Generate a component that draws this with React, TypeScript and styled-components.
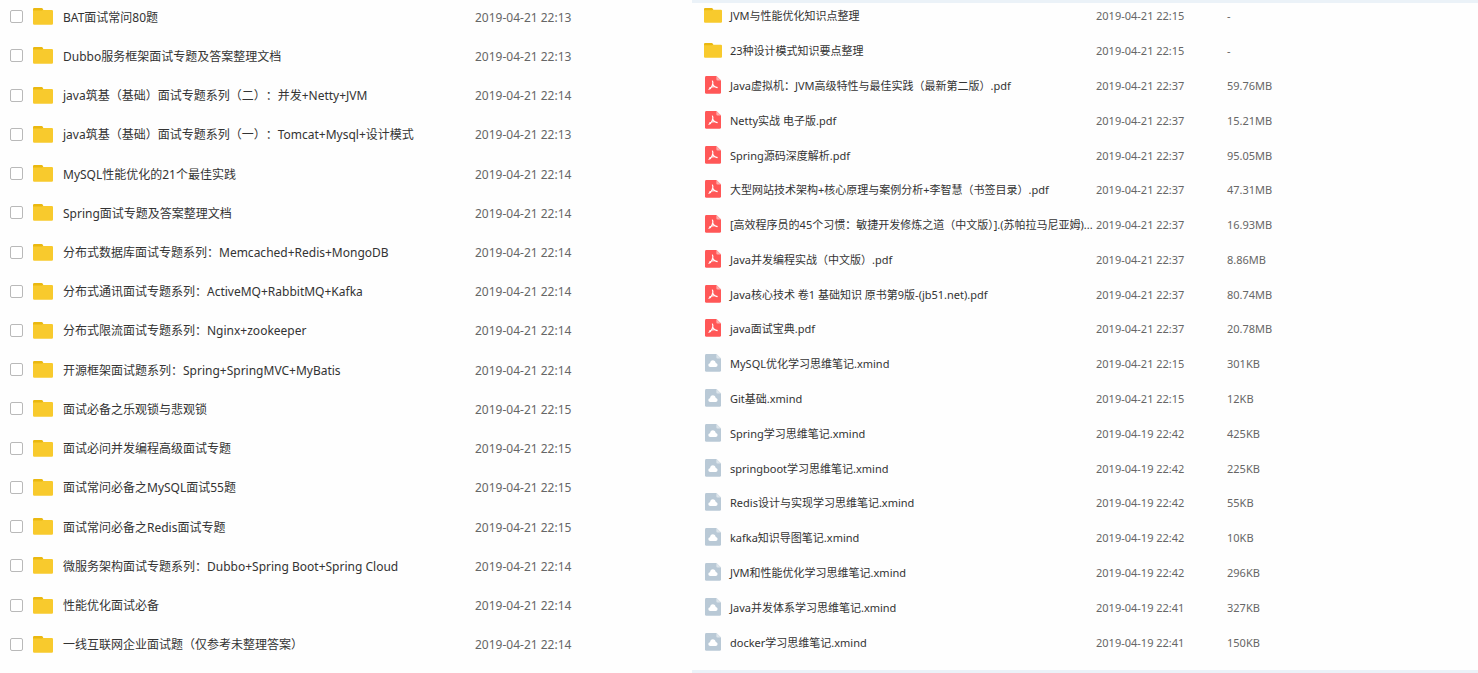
import React, { useState } from 'react';
import styled, { createGlobalStyle } from 'styled-components';

const GlobalStyle = createGlobalStyle`
  * { box-sizing: border-box; }
  body {
    margin: 0;
    background: #fefefe;
    color: #333;
    font-family: 'Noto Sans', 'Noto Sans CJK SC', sans-serif;
  }
`;

const Page = styled.main`
  display: grid;
  grid-template-columns: 692fr 786fr;
  min-height: 100vh;
  overflow: hidden;
`;

const Panel = styled.section<{ $framed?: boolean }>`
  min-width: 0;
  overflow: hidden;
  ${({ $framed }) =>
    $framed &&
    `
    border-top: 3px solid #ebf2f8;
    border-bottom: 3px solid #ebf2f8;
  `}
`;

const FileTable = styled.table<{ $compact?: boolean }>`
  width: 100%;
  height: ${({ $compact }) => ($compact ? 661 : 667)}px;
  margin-top: ${({ $compact }) => ($compact ? -5 : -3)}px;
  table-layout: fixed;
  border-collapse: collapse;
  font-size: ${({ $compact }) => ($compact ? 11 : 12)}px;
  line-height: 20px;
  text-spacing-trim: ${({ $compact }) => ($compact ? 'normal' : 'space-all')};
`;

const Col = styled.col<{ $width?: number }>`
  width: ${({ $width }) => ($width ? `${$width}px` : 'auto')};
`;

const IconCell = styled.td<{ $indent: number }>`
  padding: 0 0 0 ${({ $indent }) => $indent}px;
  vertical-align: middle;

  & > * {
    display: block;
  }
`;

const NameCell = styled.td`
  padding: 2px 0 0;
  white-space: nowrap;
  color: #333;
  vertical-align: middle;
`;

const MetaCell = styled.td`
  padding: 2px 0 0;
  white-space: nowrap;
  color: #666;
  vertical-align: middle;
`;

const Tick = styled.input`
  appearance: none;
  width: 13px;
  height: 13px;
  margin: 0;
  border: 1px solid #b9b9b9;
  border-radius: 2px;
  background: #fff;

  &:checked {
    background: #3b8cff;
    border-color: #3b8cff;
  }
`;

function FolderIcon({ width, height }: { width: number; height: number }) {
  return (
    <svg width={width} height={height} viewBox="0 0 20 17" preserveAspectRatio="none" aria-hidden="true">
      <path d="M0 4V1.2Q0 0 1.2 0H8.6Q9.4 0 9.8 .8L10.4 2.2V4Z" fill="#eab810" />
      <path d="M0 2.6H8.8L10 1.9H18.8Q20 1.9 20 3.1V15.6Q20 16.8 18.8 16.8H1.2Q0 16.8 0 15.6Z" fill="#f8ca2d" />
    </svg>
  );
}

function PdfIcon() {
  return (
    <svg width="16" height="18" viewBox="0 0 16 18" aria-hidden="true">
      <path d="M1.4 0H11.4L16 4.4V16.4Q16 17.8 14.6 17.8H1.4Q0 17.8 0 16.4V1.4Q0 0 1.4 0Z" fill="#ff5757" />
      <path d="M11.4 0L16 4.4H12.4Q11.4 4.4 11.4 3.4Z" fill="#ffadad" />
      <path
        d="M7.4 5C8.2 6 7.9 8 7 10C6.2 11.8 5 13.3 3.9 13.2M7.9 8.4C8.6 10 10.2 11.4 12.2 11.6M4.6 12C6.5 10.9 9.3 10.5 12 11.2"
        fill="none"
        stroke="#fff"
        strokeWidth="1.1"
        strokeLinecap="round"
      />
    </svg>
  );
}

function CloudIcon() {
  return (
    <svg width="16" height="18" viewBox="0 0 16 18" aria-hidden="true">
      <path d="M1.4 0H11.4L16 4.4V16.4Q16 17.8 14.6 17.8H1.4Q0 17.8 0 16.4V1.4Q0 0 1.4 0Z" fill="#b9c9d6" />
      <path d="M11.4 0L16 4.4H12.4Q11.4 4.4 11.4 3.4Z" fill="#dde5eb" />
      <path d="M5.3 13Q3.3 12.8 3.3 11Q3.4 9.4 5 9.2Q5.4 6.3 8 6.3Q10.5 6.4 10.8 9.1Q12.6 9.4 12.6 11.1Q12.5 12.9 10.7 13Z" fill="#fff" />
    </svg>
  );
}

type Kind = 'folder' | 'pdf' | 'xmind';

const topics: [string, string][] = [
  ['BAT面试常问80题', '2019-04-21 22:13'],
  ['Dubbo服务框架面试专题及答案整理文档', '2019-04-21 22:13'],
  ['java筑基（基础）面试专题系列（二）：并发+Netty+JVM', '2019-04-21 22:14'],
  ['java筑基（基础）面试专题系列（一）：Tomcat+Mysql+设计模式', '2019-04-21 22:13'],
  ['MySQL性能优化的21个最佳实践', '2019-04-21 22:14'],
  ['Spring面试专题及答案整理文档', '2019-04-21 22:14'],
  ['分布式数据库面试专题系列：Memcached+Redis+MongoDB', '2019-04-21 22:14'],
  ['分布式通讯面试专题系列：ActiveMQ+RabbitMQ+Kafka', '2019-04-21 22:14'],
  ['分布式限流面试专题系列：Nginx+zookeeper', '2019-04-21 22:14'],
  ['开源框架面试题系列：Spring+SpringMVC+MyBatis', '2019-04-21 22:14'],
  ['面试必备之乐观锁与悲观锁', '2019-04-21 22:15'],
  ['面试必问并发编程高级面试专题', '2019-04-21 22:15'],
  ['面试常问必备之MySQL面试55题', '2019-04-21 22:15'],
  ['面试常问必备之Redis面试专题', '2019-04-21 22:15'],
  ['微服务架构面试专题系列：Dubbo+Spring Boot+Spring Cloud', '2019-04-21 22:14'],
  ['性能优化面试必备', '2019-04-21 22:14'],
  ['一线互联网企业面试题（仅参考未整理答案）', '2019-04-21 22:14'],
];

const files: [Kind, string, string, string][] = [
  ['folder', 'JVM与性能优化知识点整理', '2019-04-21 22:15', '-'],
  ['folder', '23种设计模式知识要点整理', '2019-04-21 22:15', '-'],
  ['pdf', 'Java虚拟机：JVM高级特性与最佳实践（最新第二版）.pdf', '2019-04-21 22:37', '59.76MB'],
  ['pdf', 'Netty实战 电子版.pdf', '2019-04-21 22:37', '15.21MB'],
  ['pdf', 'Spring源码深度解析.pdf', '2019-04-21 22:37', '95.05MB'],
  ['pdf', '大型网站技术架构+核心原理与案例分析+李智慧（书签目录）.pdf', '2019-04-21 22:37', '47.31MB'],
  ['pdf', '[高效程序员的45个习惯：敏捷开发修炼之道（中文版）].(苏帕拉马尼亚姆)...', '2019-04-21 22:37', '16.93MB'],
  ['pdf', 'Java并发编程实战（中文版）.pdf', '2019-04-21 22:37', '8.86MB'],
  ['pdf', 'Java核心技术 卷1 基础知识 原书第9版-(jb51.net).pdf', '2019-04-21 22:37', '80.74MB'],
  ['pdf', 'java面试宝典.pdf', '2019-04-21 22:37', '20.78MB'],
  ['xmind', 'MySQL优化学习思维笔记.xmind', '2019-04-21 22:15', '301KB'],
  ['xmind', 'Git基础.xmind', '2019-04-21 22:15', '12KB'],
  ['xmind', 'Spring学习思维笔记.xmind', '2019-04-19 22:42', '425KB'],
  ['xmind', 'springboot学习思维笔记.xmind', '2019-04-19 22:42', '225KB'],
  ['xmind', 'Redis设计与实现学习思维笔记.xmind', '2019-04-19 22:42', '55KB'],
  ['xmind', 'kafka知识导图笔记.xmind', '2019-04-19 22:42', '10KB'],
  ['xmind', 'JVM和性能优化学习思维笔记.xmind', '2019-04-19 22:42', '296KB'],
  ['xmind', 'Java并发体系学习思维笔记.xmind', '2019-04-19 22:41', '327KB'],
  ['xmind', 'docker学习思维笔记.xmind', '2019-04-19 22:41', '150KB'],
];

function TopicRow({ name, date, id }: { name: string; date: string; id: string }) {
  const [checked, setChecked] = useState(false);
  return (
    <tr>
      <IconCell $indent={10}>
        <Tick id={id} type="checkbox" checked={checked} onChange={(e) => setChecked(e.target.checked)} />
      </IconCell>
      <IconCell $indent={0}>
        <FolderIcon width={20} height={17} />
      </IconCell>
      <NameCell>
        <label htmlFor={id}>{name}</label>
      </NameCell>
      <MetaCell>{date}</MetaCell>
    </tr>
  );
}

function FileIcon({ kind }: { kind: Kind }) {
  if (kind === 'folder') return <FolderIcon width={18} height={15} />;
  return kind === 'pdf' ? <PdfIcon /> : <CloudIcon />;
}

export default function App() {
  return (
    <Page>
      <GlobalStyle />
      <Panel>
        <FileTable>
          <colgroup>
            <Col $width={33} />
            <Col $width={30} />
            <Col $width={412} />
            <Col />
          </colgroup>
          <tbody>
            {topics.map(([name, date], i) => (
              <TopicRow key={name} id={`topic-${i}`} name={name} date={date} />
            ))}
          </tbody>
        </FileTable>
      </Panel>
      <Panel $framed>
        <FileTable $compact>
          <colgroup>
            <Col $width={38} />
            <Col $width={366} />
            <Col $width={131} />
            <Col />
          </colgroup>
          <tbody>
            {files.map(([kind, name, date, size]) => (
              <tr key={name}>
                <IconCell $indent={kind === 'folder' ? 12 : 13}>
                  <FileIcon kind={kind} />
                </IconCell>
                <NameCell>{name}</NameCell>
                <MetaCell>{date}</MetaCell>
                <MetaCell>{size}</MetaCell>
              </tr>
            ))}
          </tbody>
        </FileTable>
      </Panel>
    </Page>
  );
}
